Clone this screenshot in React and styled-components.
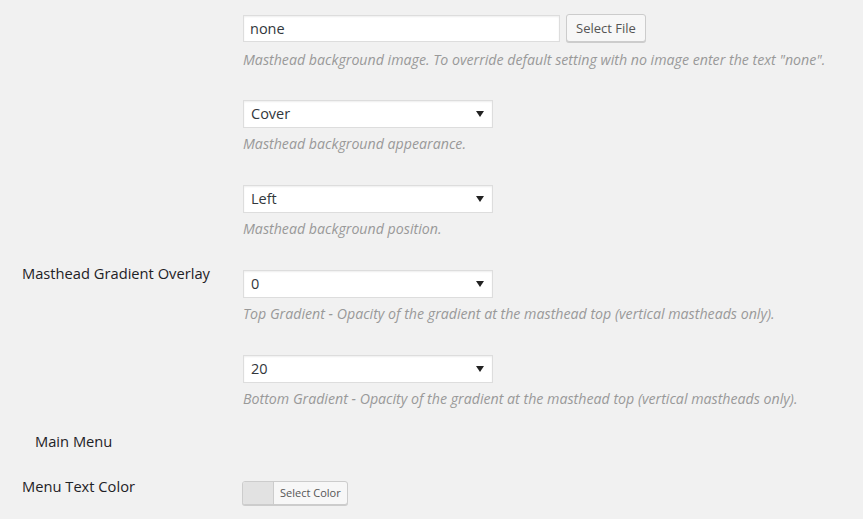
import React from 'react';
import styled, { createGlobalStyle } from 'styled-components';

const GlobalStyle = createGlobalStyle`
  html, body {
    margin: 0;
    padding: 0;
    background: #f1f1f1;
  }
  body {
    font-family: "Open Sans", "Noto Sans", sans-serif;
    color: #23282d;
    font-size: 14px;
  }
`;

const Page = styled.div`
  padding: 15px 0 0 22px;
  width: 863px;
  height: 519px;
  box-sizing: border-box;
  overflow: hidden;
`;

const Row = styled.div`
  display: grid;
  grid-template-columns: 221px 1fr;
  height: ${(p) => p.h || 85}px;
`;

const Label = styled.div`
  font-size: 14.7px;
  font-weight: 400;
  color: #1e2226;
  line-height: 20px;
  margin-top: ${(p) => p.top || 0}px;
`;

const Field = styled.div`
  display: flex;
  flex-direction: column;
  align-items: flex-start;
`;

const Inline = styled.div`
  display: flex;
  align-items: center;
  gap: 6px;
`;

const TextInput = styled.input`
  width: 317px;
  height: 27px;
  box-sizing: border-box;
  margin: 0;
  padding: 3px 6px;
  border: 1px solid #ddd;
  box-shadow: inset 0 1px 2px rgba(0, 0, 0, 0.07);
  background: #fff;
  font-family: inherit;
  font-size: 14.5px;
  color: #32373c;
  outline: none;
`;

const Button = styled.button`
  height: 28px;
  box-sizing: border-box;
  padding: 0 9px 1px;
  border: 1px solid #ccc;
  border-radius: 3px;
  background: #f7f7f7;
  box-shadow: 0 1px 0 #ccc;
  font-family: inherit;
  font-size: 13px;
  color: #555;
  margin-top: -1px;
`;

const SelectBox = styled.div`
  width: 250px;
  height: 28px;
  box-sizing: border-box;
  border: 1px solid #ddd;
  box-shadow: inset 0 1px 2px rgba(0, 0, 0, 0.07);
  background: #fff;
  display: flex;
  align-items: center;
  padding: 0 7px 1px;
  font-size: 14.5px;
  color: #32373c;
`;

const Arrow = styled.span`
  margin-left: auto;
  width: 0;
  height: 0;
  border-left: 4px solid transparent;
  border-right: 4px solid transparent;
  border-top: 6px solid #222;
  margin-right: 1px;
`;

const Description = styled.p`
  margin: ${(p) => p.gap || 6}px 0 0;
  font-size: 14.2px;
  font-style: italic;
  color: #999;
  line-height: 20px;
`;

const SubHeading = styled.div`
  font-size: 14.7px;
  font-weight: 400;
  line-height: 20px;
  color: #1e2226;
  padding-left: 13px;
`;

const ColorButton = styled.div`
  display: flex;
  height: 24px;
  box-sizing: border-box;
  border: 1px solid #ccc;
  border-radius: 3px;
  background: #f7f7f7;
  box-shadow: 0 1px 0 #ccc;
  overflow: hidden;
  margin: 5px 0 0 -1px;
`;

const Swatch = styled.span`
  width: 30px;
  background: ${(p) => p.color};
  border-right: 1px solid #ccc;
`;

const ColorText = styled.span`
  padding: 0 6px;
  font-size: 11px;
  line-height: 22px;
  color: #555;
`;

const Select = ({ value }) => (
  <SelectBox>
    {value}
    <Arrow />
  </SelectBox>
);

const App = () => (
  <>
    <GlobalStyle />
    <Page>
      <Row>
        <Label />
        <Field>
          <Inline>
            <TextInput defaultValue="none" />
            <Button>Select File</Button>
          </Inline>
          <Description gap={8}>
            Masthead background image. To override default setting with no image enter the text "none".
          </Description>
        </Field>
      </Row>
      <Row>
        <Label />
        <Field>
          <Select value="Cover" />
          <Description>Masthead background appearance.</Description>
        </Field>
      </Row>
      <Row>
        <Label />
        <Field>
          <Select value="Left" />
          <Description>Masthead background position.</Description>
        </Field>
      </Row>
      <Row>
        <Label top={-7}>Masthead Gradient Overlay</Label>
        <Field>
          <Select value="0" />
          <Description>
            Top Gradient - Opacity of the gradient at the masthead top (vertical mastheads only).
          </Description>
        </Field>
      </Row>
      <Row h={76}>
        <Label />
        <Field>
          <Select value="20" />
          <Description>
            Bottom Gradient - Opacity of the gradient at the masthead top (vertical mastheads only).
          </Description>
        </Field>
      </Row>
      <Row h={45}>
        <SubHeading>Main Menu</SubHeading>
        <Field />
      </Row>
      <Row h={43}>
        <Label>Menu Text Color</Label>
        <Field>
          <ColorButton>
            <Swatch color="#e2e2e2" />
            <ColorText>Select Color</ColorText>
          </ColorButton>
        </Field>
      </Row>
    </Page>
  </>
);

export default App;
